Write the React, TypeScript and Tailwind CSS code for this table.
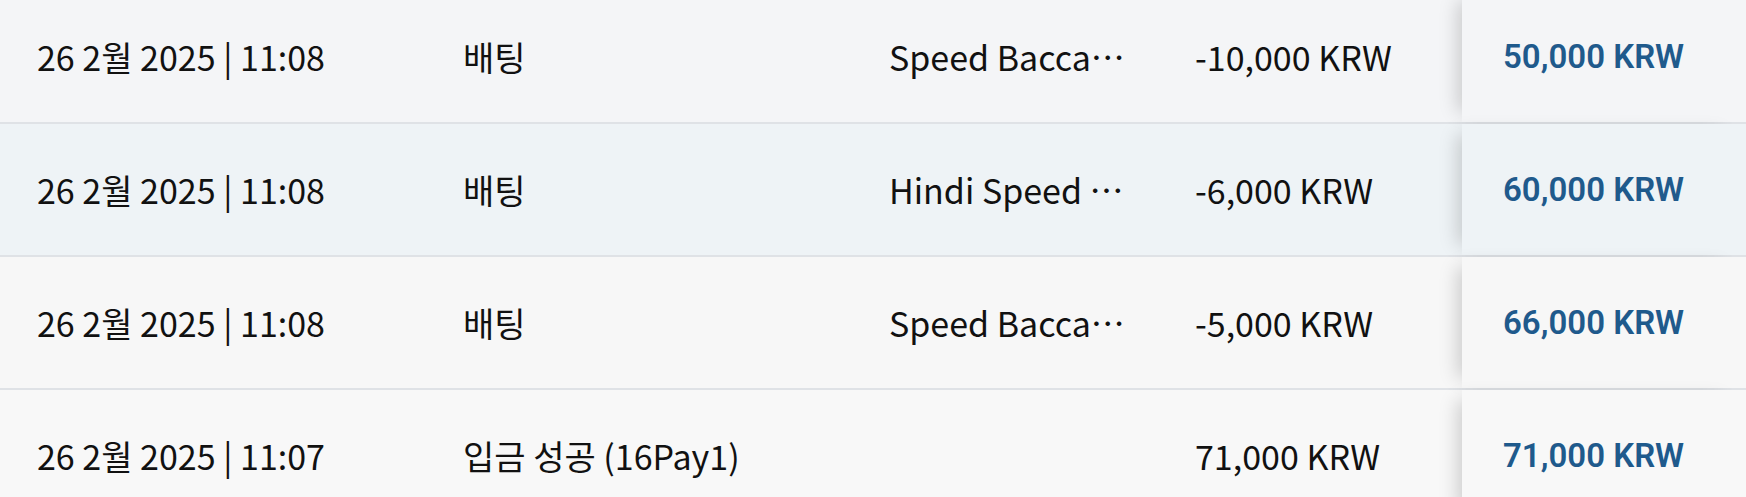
import React from 'react';

interface Txn {
  date: string;
  type: string;
  game: string;
  amount: string;
  balance: string;
  bg: string;
}

const rows: Txn[] = [
  { date: '26 2월 2025 | 11:08', type: '배팅', game: 'Speed Baccarat A', amount: '-10,000 KRW', balance: '50,000 KRW', bg: 'bg-[#f4f5f7]' },
  { date: '26 2월 2025 | 11:08', type: '배팅', game: 'Hindi Speed Baccarat', amount: '-6,000 KRW', balance: '60,000 KRW', bg: 'bg-[#eef3f6]' },
  { date: '26 2월 2025 | 11:08', type: '배팅', game: 'Speed Baccarat B', amount: '-5,000 KRW', balance: '66,000 KRW', bg: 'bg-[#f7f7f7]' },
  { date: '26 2월 2025 | 11:07', type: '입금 성공 (16Pay1)', game: '', amount: '71,000 KRW', balance: '71,000 KRW', bg: 'bg-[#f8f8f8]' },
];

const App: React.FC = () => {
  return (
    <div
      className="h-[497px] w-full overflow-hidden bg-[#f8f8f8] text-[34px] text-[#111111]"
      style={{ fontFamily: '"Noto Sans CJK KR", "Noto Sans", sans-serif' }}
    >
      <div className="-mt-[9px]">
        {rows.map((r, i) => (
          <div
            key={i}
            className={`grid h-[133px] grid-cols-[426px_426px_306px_304px_1fr] items-stretch border-b-2 border-[#dfe2e6] ${r.bg}`}
          >
            <div className="flex items-center whitespace-nowrap pl-[37px]">{r.date}</div>
            <div className="flex items-center whitespace-nowrap pl-[37px]">{r.type}</div>
            <div className="flex min-w-0 items-center pl-[37px] pr-[31px]">
              <span className="truncate">{r.game}</span>
            </div>
            <div className="flex items-center whitespace-nowrap pl-[37px]">{r.amount}</div>
            <div
              className={`relative flex items-center whitespace-nowrap pl-[41px] font-['Roboto',sans-serif] text-[33px] font-semibold text-[#1f5a8c] shadow-[-14px_0_18px_-10px_rgba(0,0,0,0.18)] ${r.bg}`}
            >
              {r.balance}
            </div>
          </div>
        ))}
      </div>
    </div>
  );
};

export default App;
